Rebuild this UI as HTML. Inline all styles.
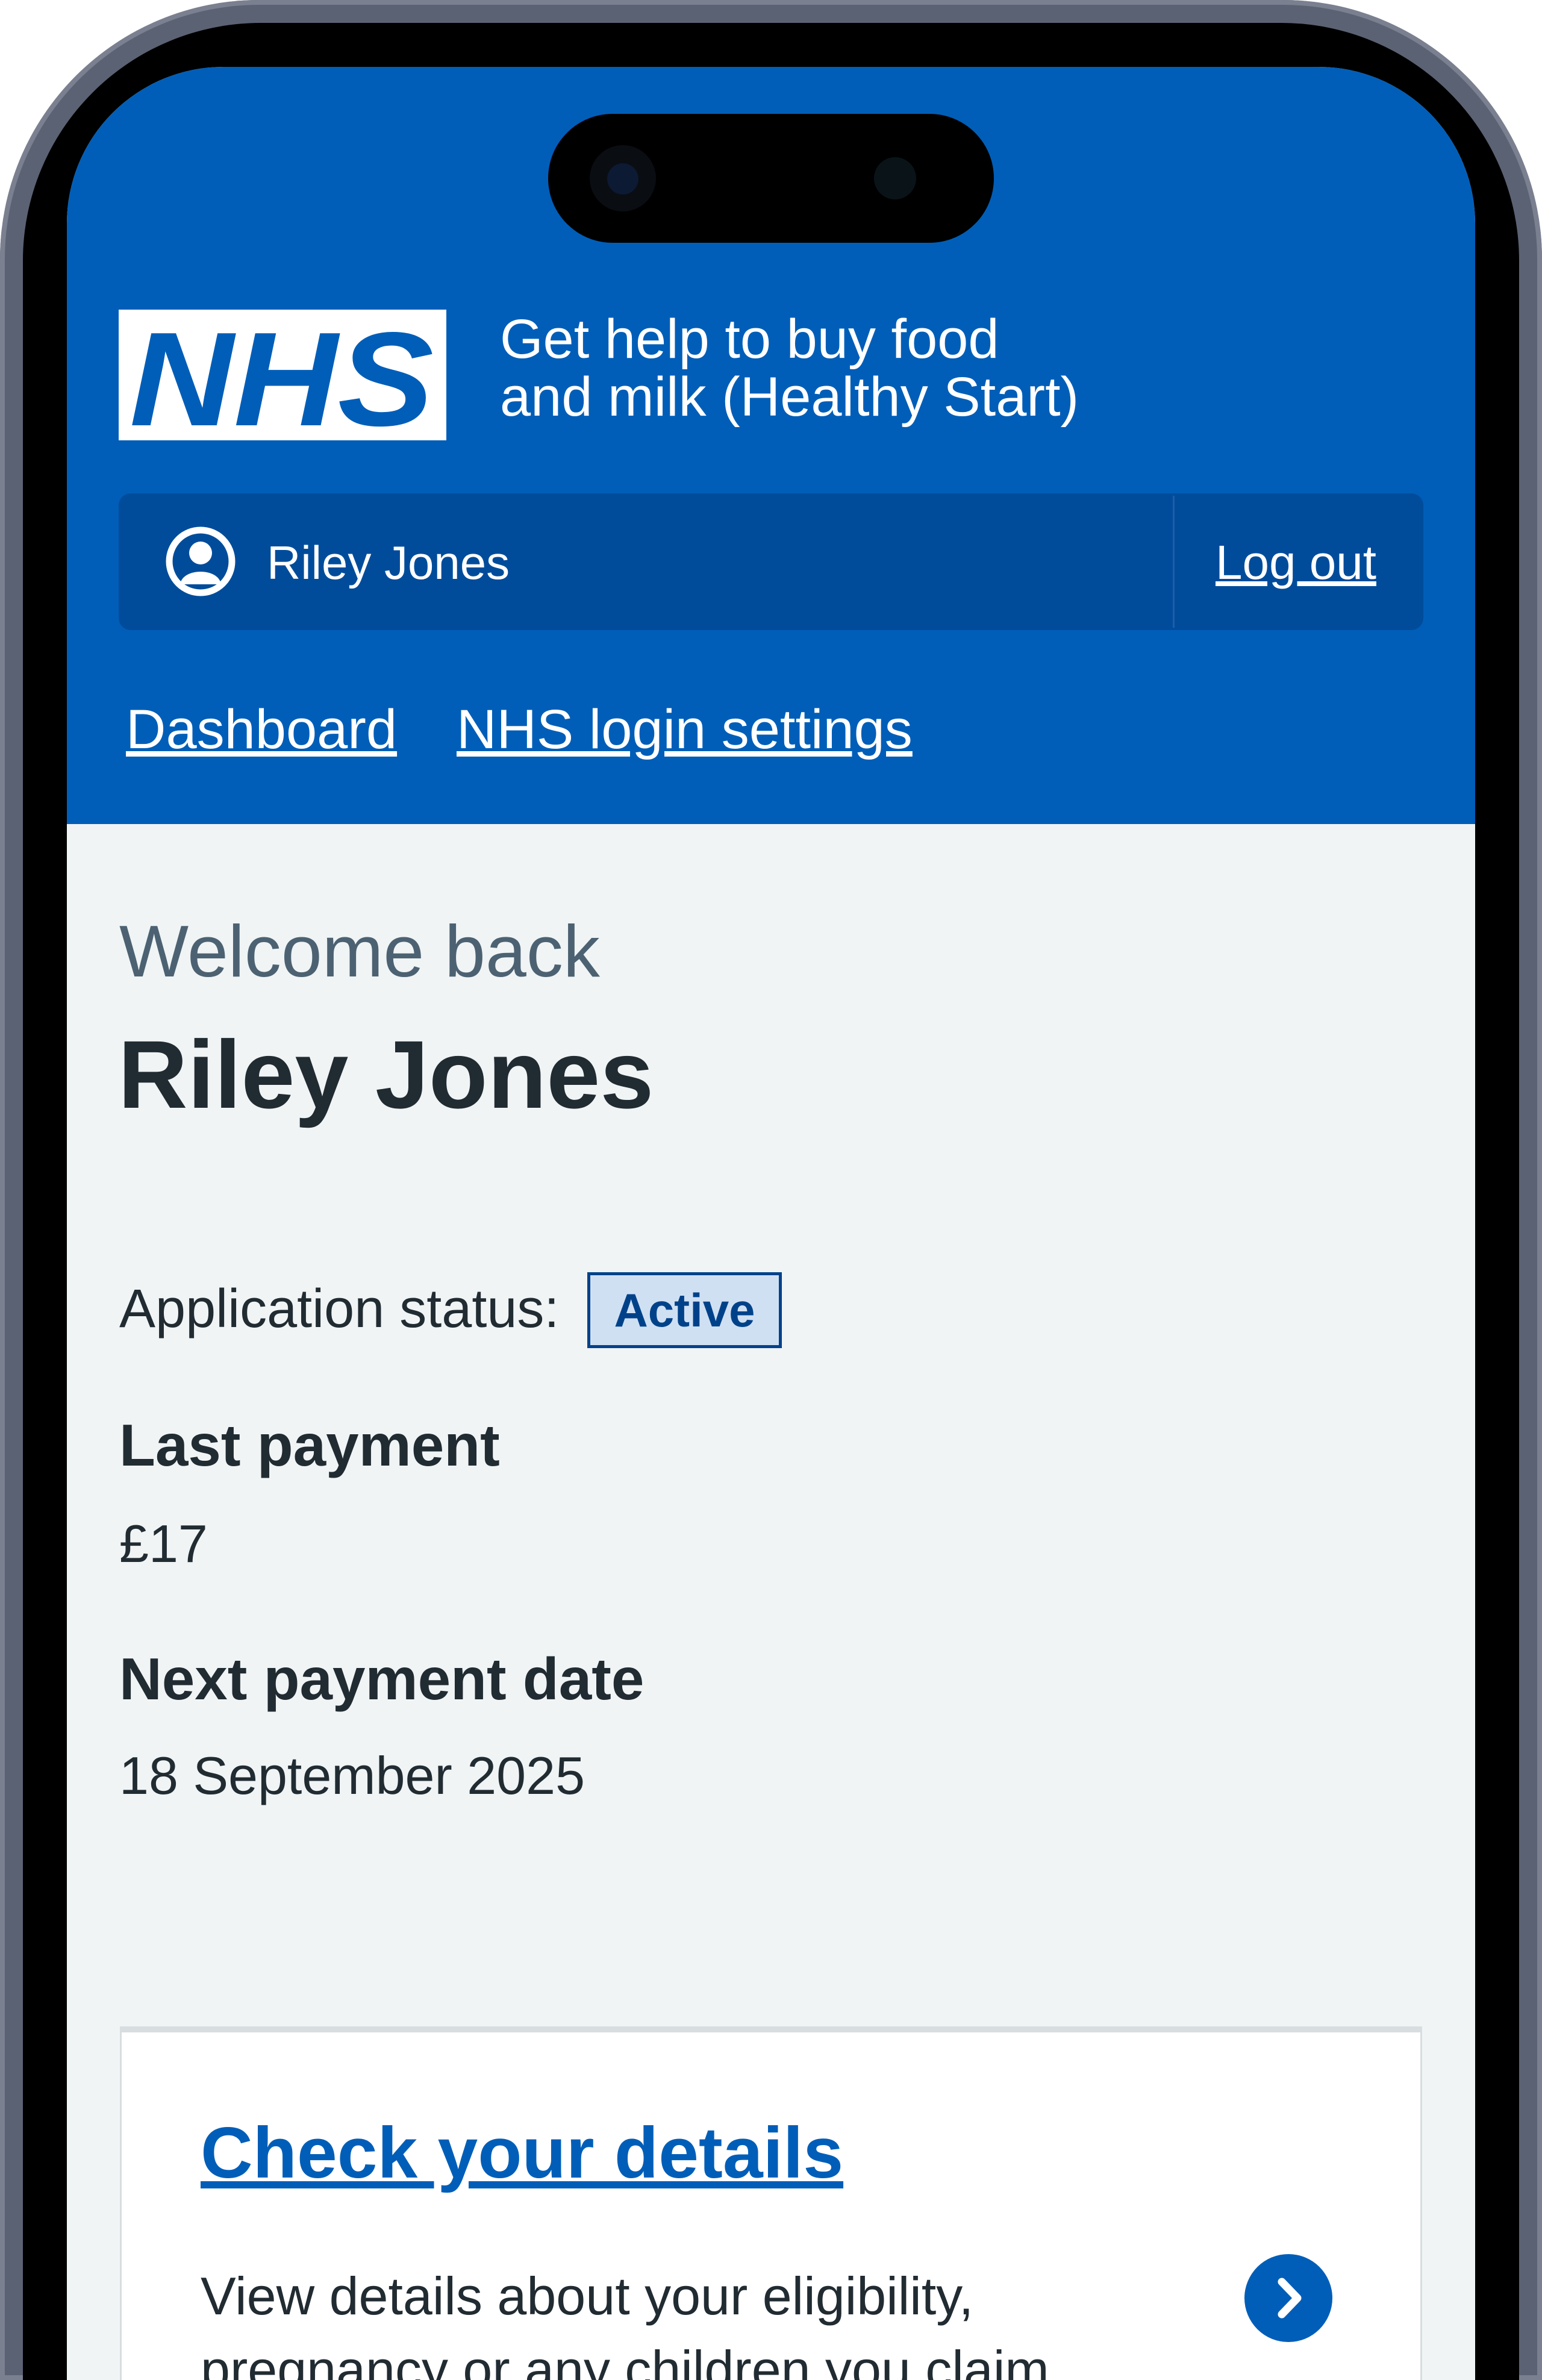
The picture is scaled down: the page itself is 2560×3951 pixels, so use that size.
<!DOCTYPE html>
<html style="height:3951px;overflow:hidden"><head><meta charset="utf-8"><style>
*{margin:0;padding:0;box-sizing:border-box}
body{width:2560px;height:3951px;background:#fff;overflow:hidden;position:relative;font-family:"Liberation Sans",sans-serif}
#wrap{position:absolute;left:0;top:0;width:2560px;height:3951px;overflow:hidden}
.a{position:absolute;white-space:nowrap}
#frame{position:absolute;left:0;top:0;width:2560px;height:3951px;border-radius:430px 430px 0 0;background:#5b6273;box-shadow:inset 0 0 0 8px #7a8090}
#black{position:absolute;left:38px;top:38px;width:2484px;height:3913px;border-radius:395px 395px 0 0;background:#000}
#screen{position:absolute;left:111px;top:111px;width:2338px;height:3840px;border-radius:260px 260px 0 0;background:#f0f4f5;overflow:hidden}
#hdr{position:absolute;left:0;top:0;width:2338px;height:1257px;background:#005eb8}
u{text-decoration:underline}
</style></head><body>
<div id="wrap">
<div id="frame"></div>
<div id="black"></div>
<div id="screen">
 <div id="hdr"></div>
 <div class="a" style="left:799px;top:78px;width:740px;height:214px;border-radius:107px;background:#000"></div>
 <div class="a" style="left:868px;top:130px;width:110px;height:110px;border-radius:50%;background:#0a0d12"></div>
 <div class="a" style="left:897px;top:160px;width:52px;height:52px;border-radius:50%;background:#0d1a33"></div>
 <div class="a" style="left:1340px;top:150px;width:70px;height:70px;border-radius:50%;background:#0a1418"></div>
 <svg class="a" style="left:86px;top:403px" width="544" height="217" viewBox="0 0 544 217"><rect width="544" height="217" fill="#fff"/><text x="18" y="192" textLength="505" lengthAdjust="spacingAndGlyphs" font-family="Liberation Sans, sans-serif" font-weight="bold" font-style="italic" font-size="222" fill="#005eb8">NHS</text></svg>
 <div class="a" style="left:719px;top:404px;color:#fff;font-size:92px;line-height:96px">Get help to buy food<br>and milk (Healthy Start)</div>
 <div class="a" style="left:86px;top:708px;width:2166px;height:227px;border-radius:20px;background:#004c9b"></div>
 <div class="a" style="left:1836px;top:712px;width:3px;height:219px;background:#1e5ea8"></div>
 <svg class="a" style="left:160px;top:759px" width="124" height="124" viewBox="0 0 124 124"><circle cx="62" cy="62" r="52" fill="none" stroke="#fff" stroke-width="11"/><circle cx="62" cy="48" r="19" fill="#fff"/><path d="M28 100 C32 72 92 72 96 100 Z" fill="#fff"/></svg>
 <div class="a" style="left:332px;top:778px;color:#fff;font-size:78px;line-height:90px">Riley Jones</div>
 <div class="a" style="left:1907px;top:778px;color:#fff;font-size:80px;line-height:90px"><u>Log out</u></div>
 <div class="a" style="left:98px;top:1045px;color:#fff;font-size:92px;line-height:110px"><u>Dashboard</u></div>
 <div class="a" style="left:647px;top:1045px;color:#fff;font-size:92px;line-height:110px"><u>NHS login settings</u></div>
 <div class="a" style="left:87px;top:1398px;color:#4c6272;font-size:122px;line-height:140px">Welcome back</div>
 <div class="a" style="left:85px;top:1573px;color:#212b32;font-size:160px;font-weight:bold;line-height:200px">Riley Jones</div>
 <div class="a" style="left:87px;top:2010px;color:#212b32;font-size:90px;line-height:104px">Application status:</div>
 <div class="a" style="left:864px;top:2001px;width:323px;height:126px;background:#d0e0f3;border:5px solid #00428a;color:#00428a;font-size:78px;font-weight:bold;line-height:116px;text-align:center">Active</div>
 <div class="a" style="left:87px;top:2230px;color:#212b32;font-size:98px;font-weight:bold;line-height:116px">Last payment</div>
 <div class="a" style="left:87px;top:2400px;color:#212b32;font-size:88px;line-height:104px">£17</div>
 <div class="a" style="left:87px;top:2618px;color:#212b32;font-size:98px;font-weight:bold;line-height:116px">Next payment date</div>
 <div class="a" style="left:87px;top:2785px;color:#212b32;font-size:88px;line-height:104px">18 September 2025</div>
 <div class="a" style="left:88px;top:3253px;width:2162px;height:600px;background:#fff;border:3px solid #d8dde0;border-top:10px solid #d8dde0;border-bottom:0"></div>
 <div class="a" style="left:222px;top:3393px;color:#005eb8;font-size:120px;font-weight:bold;line-height:140px"><u>Check your details</u></div>
 <div class="a" style="left:222px;top:3640px;color:#212b32;font-size:88px;line-height:122px;height:200px;overflow:hidden">View details about your eligibility,<br>pregnancy or any children you claim</div>
 <svg class="a" style="left:1955px;top:3631px" width="146" height="146" viewBox="0 0 146 146"><circle cx="73" cy="73" r="73" fill="#005eb8"/><path d="M62 46 L88 73 L62 100" fill="none" stroke="#fff" stroke-width="13" stroke-linecap="round" stroke-linejoin="round"/></svg>
</div>
</div>
</body></html>
